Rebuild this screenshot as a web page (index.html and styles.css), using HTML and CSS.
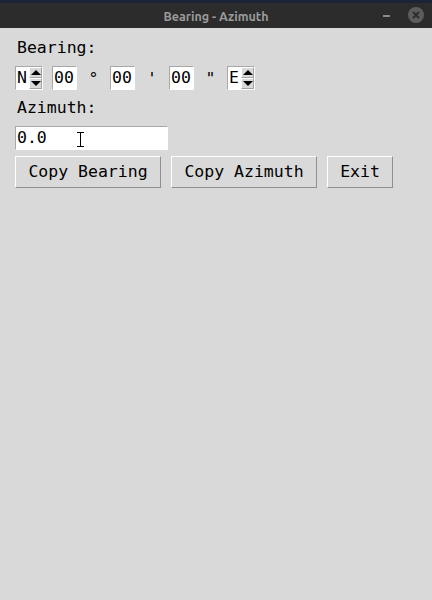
FILE: index.html
```html
<!DOCTYPE html>
<html>
<head>
<meta charset="utf-8">
<link rel="stylesheet" href="styles.css">
</head>
<body>
<div class="topstrip"></div>
<div class="titlebar">
  <span class="title">Bearing - Azimuth</span>
  <span class="min"></span>
  <span class="close">
    <svg width="18" height="18" viewBox="0 0 18 18"><circle cx="9" cy="9" r="8" fill="#5c5c5c"/><path d="M6 6 L12 12 M12 6 L6 12" stroke="#2e2e2e" stroke-width="2"/></svg>
  </span>
</div>
<div class="app">
  <div class="label">Bearing:</div>
  <div class="row">
    <div class="spin"><span class="val">N</span><span class="arrows"><span class="up"></span><span class="down"></span></span></div>
    <div class="box first">00</div>
    <span class="sym">°</span>
    <div class="box">00</div>
    <span class="sym wide">'</span>
    <div class="box">00</div>
    <span class="sym">"</span>
    <div class="spin"><span class="val">E</span><span class="arrows"><span class="up"></span><span class="down"></span></span></div>
  </div>
  <div class="label">Azimuth:</div>
  <div class="entry"><span>0.0</span>
    <svg class="ibeam" width="9" height="17" viewBox="0 0 9 17"><path d="M1 1.5 H8 M4.5 1.5 V15.5 M1 15.5 H8" stroke="#fff" stroke-width="3"/><path d="M1 1.5 H8 M4.5 1.5 V15.5 M1 15.5 H8" stroke="#000" stroke-width="1"/></svg>
  </div>
  <div class="buttons">
    <div class="btn wide">Copy Bearing</div>
    <div class="btn wide">Copy Azimuth</div>
    <div class="btn exit">Exit</div>
  </div>
</div>
</body>
</html>
```
FILE: styles.css
```css
html, body { margin: 0; padding: 0; }
body {
  width: 432px;
  height: 600px;
  background: #d9d9d9;
  font-family: "DejaVu Sans Mono", "Liberation Mono", monospace;
  font-size: 16.5px;
  color: #000;
  overflow: hidden;
}
.topstrip { height: 3px; background: #1d2336; }
.titlebar {
  height: 25px;
  background: #2c2c2c;
  position: relative;
  display: flex;
  align-items: center;
  justify-content: center;
}
.title {
  font-family: "Ubuntu", "Open Sans", "DejaVu Sans", sans-serif;
  font-weight: bold;
  font-size: 12.5px;
  color: #9a9a9a;
}
.min {
  position: absolute;
  left: 383px;
  top: 12px;
  width: 7px;
  height: 2px;
  background: #8a8a8a;
}
.close { position: absolute; left: 407px; top: 3px; width: 18px; height: 18px; }
.close svg { display: block; }
.app {
  padding: 10px 15px 0 15px;
  display: flex;
  flex-direction: column;
}
.label { height: 20px; line-height: 20px; padding-left: 2px; }
.row {
  margin-top: 8px;
  display: flex;
  align-items: center;
  height: 24px;
}
.spin {
  height: 22px;
  background: #fff;
  border-top: 1px solid #a8a8a8;
  border-left: 1px solid #a8a8a8;
  border-bottom: 1px solid #fff;
  border-right: 1px solid #fff;
  display: flex;
  align-items: stretch;
}
.val { width: 12px; line-height: 22px; padding-left: 1px; }
.arrows {
  width: 13px;
  display: flex;
  flex-direction: column;
  background: #d9d9d9;
}
.up, .down {
  flex: 1;
  position: relative;
  border-top: 1px solid #fff;
  border-left: 1px solid #fff;
  border-right: 1px solid #a3a3a3;
  border-bottom: 1px solid #a3a3a3;
}
.up::after, .down::after {
  content: "";
  position: absolute;
  left: 1px;
  width: 0; height: 0;
  border-left: 5px solid transparent;
  border-right: 5px solid transparent;
}
.up::after { top: 2px; border-bottom: 5px solid #000; }
.down::after { top: 2px; border-top: 5px solid #000; }
.box {
  width: 22px;
  height: 22px;
  line-height: 22px;
  background: #fff;
  border-top: 1px solid #a8a8a8;
  border-left: 1px solid #a8a8a8;
  border-bottom: 1px solid #fff;
  border-right: 1px solid #fff;
  padding-left: 1px;
}
.box.first { margin-left: 9px; }
.sym { width: 33px; text-align: center; }
.sym.wide { width: 34px; }
.row + .label { margin-top: 8px; }
.entry {
  margin-top: 8px;
  width: 150px;
  height: 22px;
  line-height: 22px;
  background: #fff;
  border-top: 1px solid #a8a8a8;
  border-left: 1px solid #a8a8a8;
  border-bottom: 1px solid #fff;
  border-right: 1px solid #fff;
  padding-left: 1px;
  position: relative;
}
.ibeam { position: absolute; left: 60px; top: 4px; }
.buttons {
  margin-top: 6px;
  display: flex;
  gap: 10px;
}
.btn {
  height: 30px;
  line-height: 30px;
  background: #d9d9d9;
  border-top: 1px solid #fff;
  border-left: 1px solid #fff;
  border-right: 1px solid #8f8f8f;
  border-bottom: 1px solid #8f8f8f;
  padding: 0 12px;
  text-align: center;
}
.btn.wide { width: 120px; }
.btn.exit { width: 40px; }
```
